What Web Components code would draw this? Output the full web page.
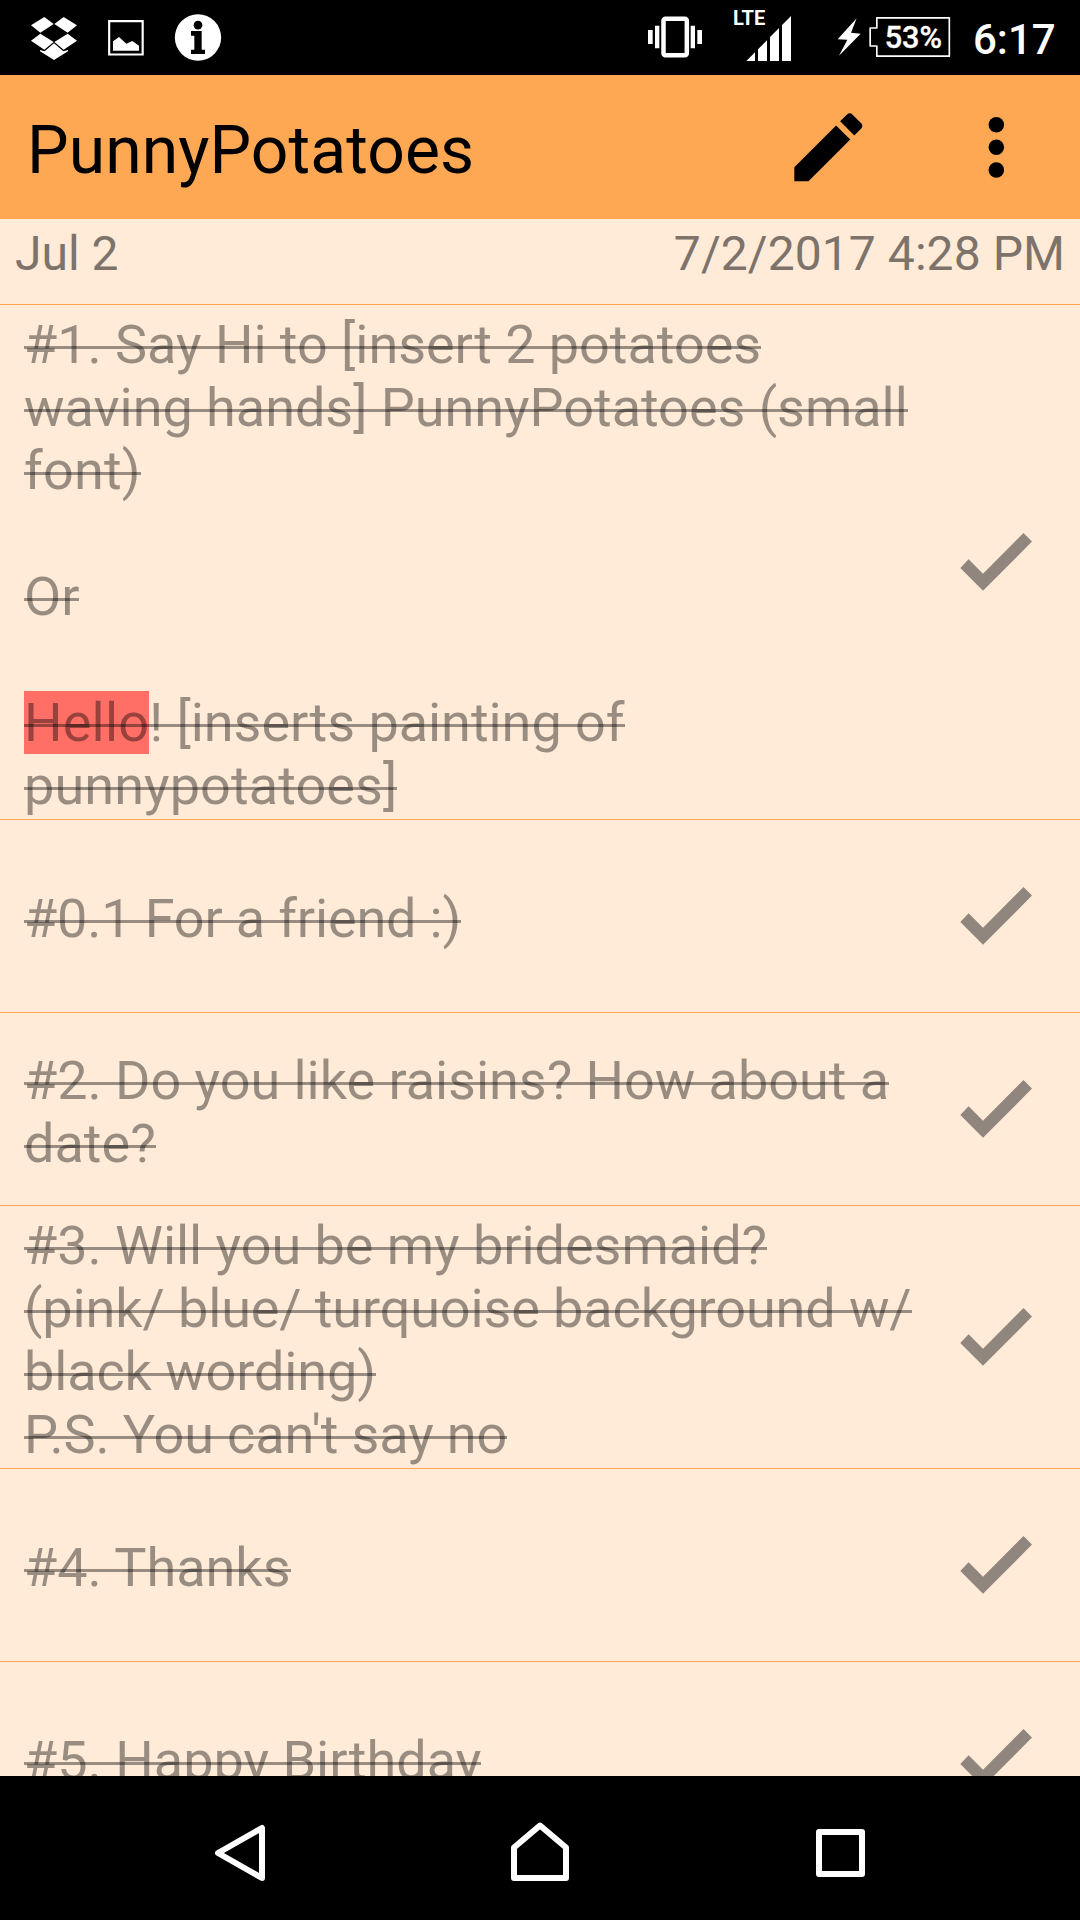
<!DOCTYPE html>
<html lang="en">
<head>
<meta charset="utf-8">
<title>PunnyPotatoes</title>
<style>
html,body{margin:0;padding:0;height:100%;background:#000}
body{font-family:Roboto,"Noto Sans",sans-serif;width:1080px;height:1920px;overflow:hidden}
</style>
</head>
<body>
<note-screen></note-screen>
<script>
const define = (name, html) => customElements.define(name, class extends HTMLElement {
  constructor() {
    super();
    this.attachShadow({mode: 'open'}).innerHTML = html;
  }
});

define('status-bar', `
<style>
:host{display:flex;justify-content:space-between;height:75px;background:#000;color:#fff;flex:none}
div{display:flex}
.left{padding-left:28px}
.right{padding-right:24px}
svg{display:block;height:75px;fill:#fff;flex:none}
text{font-family:Roboto,sans-serif}
</style>
<div class="left">
  <svg width="72" viewBox="84 0 216 225"><path d="M93 76L133 51 161 72 121 98zM191 51L231 76 203 98 163 72zM93 122L121 101 161 126 133 149zM203 101L231 122 191 149 163 126zM120 150L134 154 162 130 190 154 204 150V154L162 180 120 154z"/></svg>
  <svg width="70" viewBox="300 0 210 225"><path fill="none" stroke="#fff" stroke-width="6.5" d="M327.5 63.5H428V163.500H327.500z"/><path d="M339 152V124L357 111 379 131 397 123 417 137V152z"/></svg>
  <svg width="60" viewBox="510 0 180 225"><circle cx="594" cy="112.500" r="69.500"/><g fill="#000"><circle cx="594" cy="75.500" r="13"/><path d="M573 93H605V149H615V162H573V149H583V107H573z"/></g></svg>
</div>
<div class="right">
  <svg width="92" viewBox="60 0 276 225"><rect x="130.500" y="56" width="70" height="110" rx="6" fill="none" stroke="#fff" stroke-width="13.500"/><path d="M105 77H118V145H105zM84 90H98V132H84zM212 77H225V145H212zM232 90H246V132H232z"/></svg>
  <svg width="100" viewBox="336 0 300 225"><text x="339" y="75" font-size="63" font-weight="700" textLength="97" lengthAdjust="spacingAndGlyphs">LTE</text><path d="M379 183L405 157V183zM414 183V148L441 121V183zM450 183V111L477 84V183zM486 183V75L513 48V183z"/></svg>
  <svg width="128" viewBox="636 0 384 225"><path d="M710 55L653 118 682 119 657 167 722 101 693 98z"/><path fill="none" stroke="#fff" stroke-width="5" stroke-linejoin="round" d="M770.500 53.500H988V168.500H770.500V138H750.500V84H770.500z"/><text x="794" y="143.500" font-size="92" font-weight="500" stroke="#fff" stroke-width="1">53%</text></svg>
  <svg width="96" viewBox="1020 0 288 225"><text x="1059" y="163" font-size="126" font-weight="500">6:17</text></svg>
</div>`);

define('app-bar', `
<style>
:host{display:flex;align-items:center;height:144px;background:#ffa853;color:#000;flex:none;box-sizing:border-box;padding:0 38.700px 0 27px}
h1{margin:7px 0 0;font-size:66px;font-weight:400;line-height:78px;letter-spacing:.08px;flex:1}
svg{width:90.667px;height:90.667px;display:block}
.edit{margin-right:77.300px}
</style>
<h1><slot></slot></h1>
<svg class="edit" viewBox="0 0 24 24"><path d="M3 17.250V21h3.750L17.810 9.940l-3.750-3.750L3 17.250zM20.710 7.040c.39-.39.39-1.020 0-1.410l-2.340-2.340c-.39-.39-1.020-.39-1.410 0l-1.830 1.830 3.750 3.750 1.830-1.830z"/></svg>
<svg viewBox="0 0 24 24"><g><circle cx="12" cy="6" r="2.050"/><circle cx="12" cy="12" r="2.050"/><circle cx="12" cy="18" r="2.050"/></g></svg>`);

define('date-row', `
<style>
:host{display:flex;justify-content:space-between;box-sizing:border-box;height:86px;padding:6px 15px 0;font-size:48px;line-height:57px;color:#7d736b;border-bottom:1px solid #ffa853;flex:none}
::slotted([slot=full]){letter-spacing:.07px}
</style>
<slot name="short"></slot><slot name="full"></slot>`);

define('check-item', `
<style>
:host{display:flex;align-items:center;box-sizing:border-box;min-height:193px;border-bottom:1px solid #ffa853;flex:none}
.text{flex:1;padding:8px 0 2px 24px;font-size:54px;line-height:63px;color:rgba(0,0,0,.4);white-space:nowrap}
:host([single]) .text{padding-bottom:3px}
.struck,::slotted(mark){background-image:linear-gradient(rgba(0,0,0,.4),rgba(0,0,0,.4));background-repeat:no-repeat;background-size:100% 3px;background-position:0 33px;-webkit-box-decoration-break:clone;box-decoration-break:clone}
::slotted(mark){color:inherit;background-color:#ff6f66;letter-spacing:.2px}
::slotted(.wide){letter-spacing:.2px}
::slotted(.loose){letter-spacing:.08px}
::slotted(.snug){letter-spacing:-.04px}
::slotted(.tight){letter-spacing:-.12px}
::slotted(.tighter){letter-spacing:-.17px}
svg{width:72px;height:58px;margin-right:48px;display:block;fill:#90867e}
</style>
<div class="text"><span class="struck"><slot></slot></span></div>
<svg viewBox="960 533 72 58"><path d="M960.300 568L968.600 559.300 983 573.700 1023.500 533 1032 541.600 983 590.800z"/></svg>`);

define('nav-bar', `
<style>
:host{display:flex;justify-content:space-between;align-items:center;box-sizing:border-box;height:144px;background:#000;flex:none;padding:0 200px}
svg{width:80px;height:80px;fill:none;stroke:#fff;stroke-width:6;stroke-linejoin:round;display:block}
</style>
<svg viewBox="200 1808 80 80"><path d="M218 1853L262 1828V1878z"/></svg>
<svg viewBox="500 1808 80 80"><path d="M514 1847.500L540 1825.500 566 1847.500V1878H514z"/></svg>
<svg viewBox="800 1808 80 80"><path d="M819 1832H862V1874H819z"/></svg>`);

define('note-screen', `
<style>
:host{display:flex;flex-direction:column;width:1080px;height:1920px}
main{flex:1;min-height:0;overflow:hidden;display:flex;flex-direction:column;background:#ffebd8}
</style>
<status-bar></status-bar>
<app-bar>PunnyPotatoes</app-bar>
<main>
<date-row><span slot="short">Jul 2</span><span slot="full">7/2/2017 4:28 PM</span></date-row>
<check-item><span class="snug">#1. Say Hi to [insert 2 potatoes<br>waving hands] PunnyPotatoes (small</span><br><span class="wide">font)</span><br><br>Or<br><br><mark>Hello</mark><span class="snug">! [inserts painting of</span><br><span class="loose">punnypotatoes]</span></check-item>
<check-item single><span class="tighter">#0.1 For a friend :)</span></check-item>
<check-item><span class="snug">#2. Do you like raisins? How about a</span><br>date?</check-item>
<check-item><span class="snug">#3. Will you be my bridesmaid?</span><br><span class="tight">(pink/ blue/ turquoise background w/<br>black wording)<br>P.S. You can't say no</span></check-item>
<check-item single>#4. Thanks</check-item>
<check-item single>#5. Happy Birthday</check-item>
</main>
<nav-bar></nav-bar>`);
</script>
</body>
</html>
